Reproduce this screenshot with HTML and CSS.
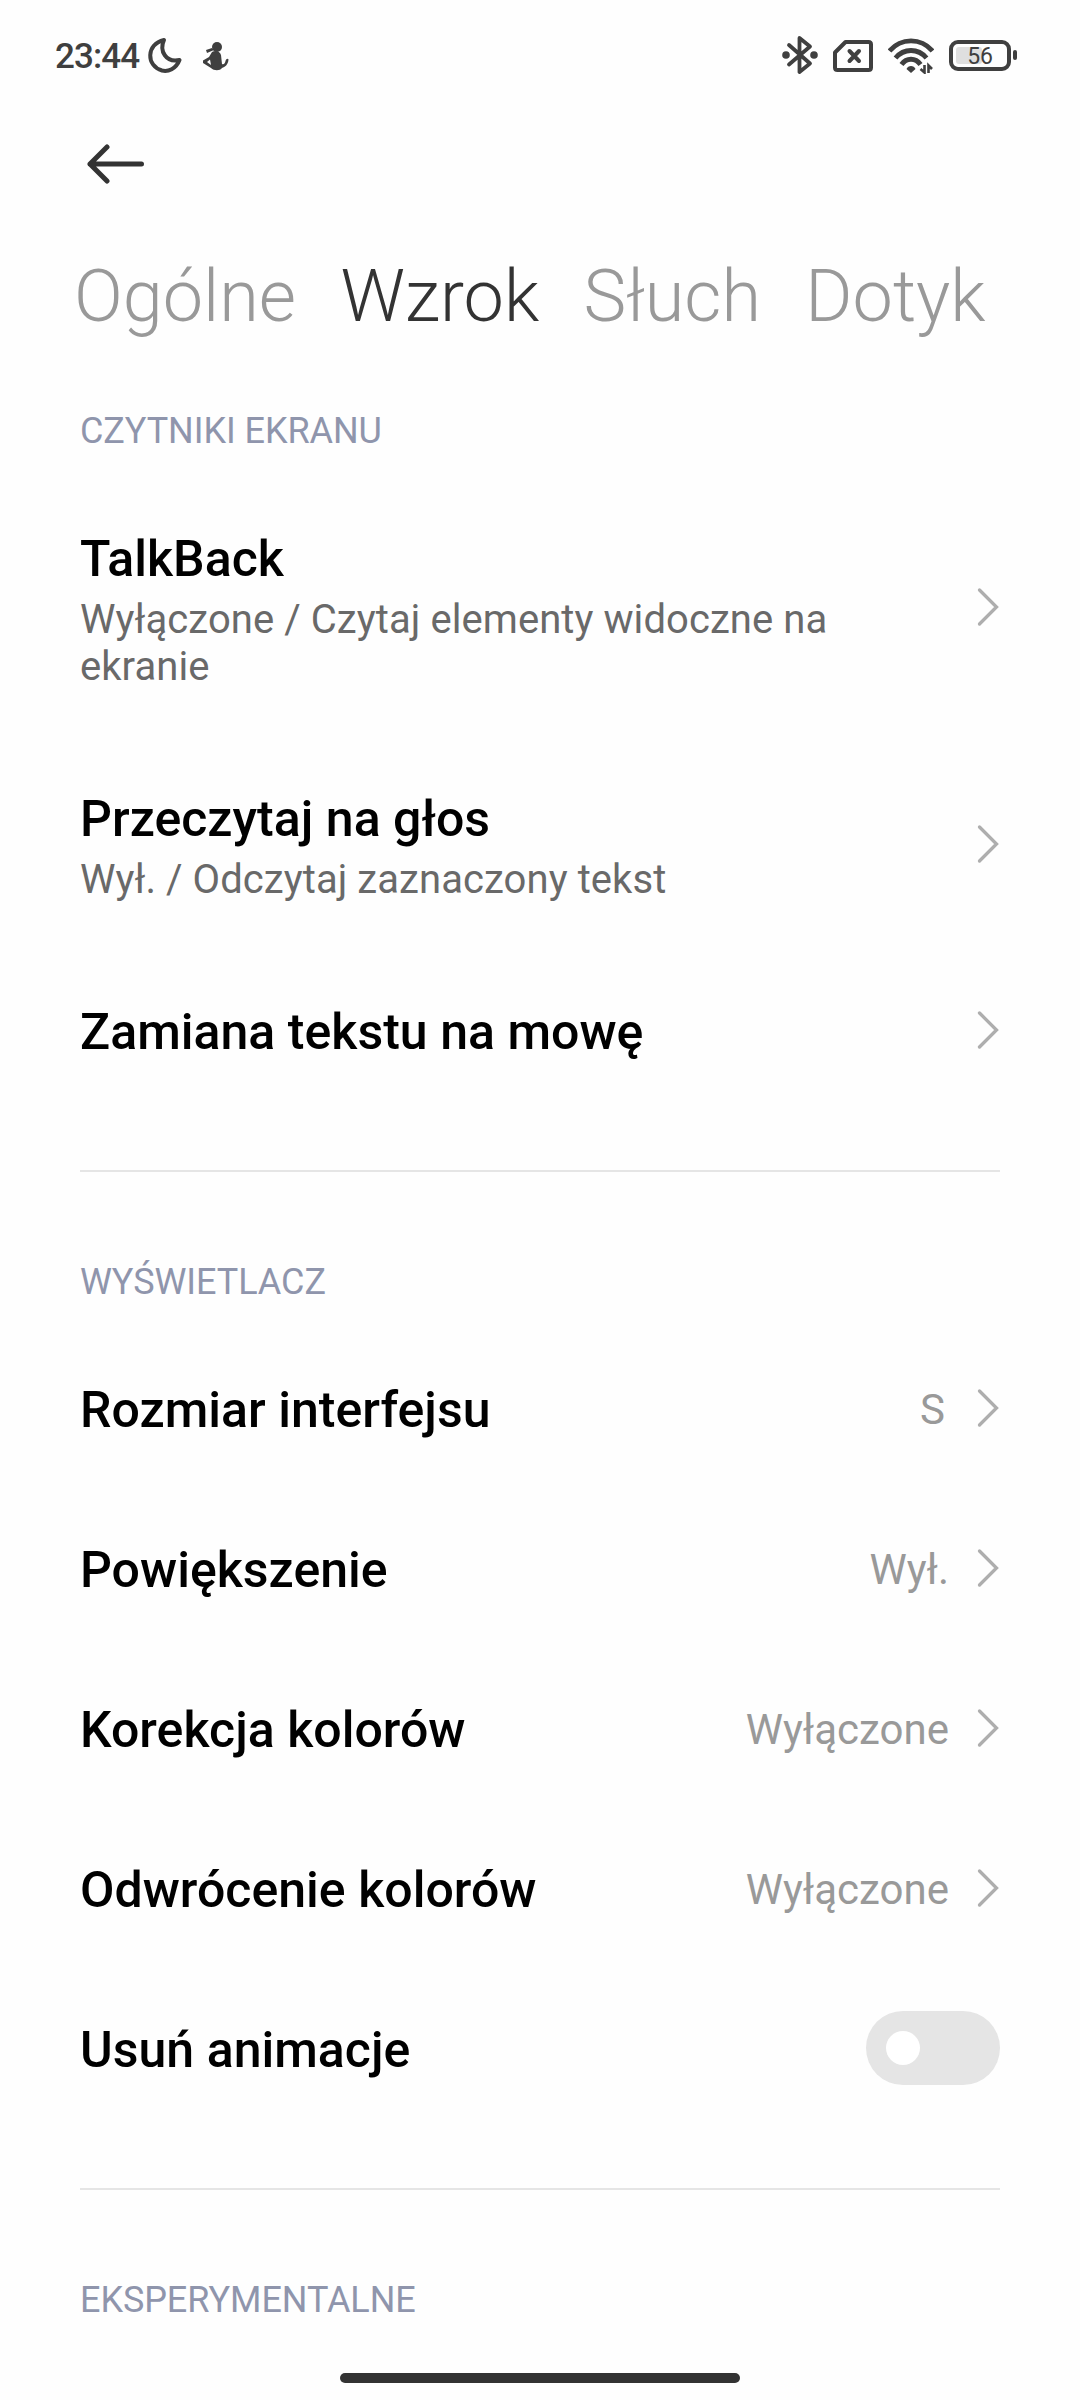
FILE: index.html
```html
<!DOCTYPE html>
<html lang="pl">
<head>
<meta charset="utf-8">
<title>Ułatwienia dostępu – Wzrok</title>
<link rel="stylesheet" href="styles.css">
</head>
<body>
<svg class="defs" aria-hidden="true">
  <symbol id="chevron" viewBox="0 0 24 40"><path d="M3.500 3 20.500 20 3.500 37" fill="none" stroke="#aeaeae" stroke-width="3.300" stroke-linecap="round"/></symbol>
</svg>

<header class="status">
  <span class="clock">23:44</span>
  <svg class="moon" viewBox="0 0 36 38"><path d="M17 3C12 14 19 26 32.500 23C29 32 21 35 15 33.500C-1 29-1 7 17 3Z" fill="none" stroke="#3f3f3f" stroke-width="4" stroke-linejoin="round"/></svg>
  <svg class="figure" viewBox="0 0 28 30"><g fill="#3f3f3f"><circle cx="15" cy="6" r="5"/><path d="M4 9 10 7 12 9 5 12Z"/><path fill-rule="evenodd" d="M10 11C13 9 18 10 19 14L20 23C22 24 23 22 23.500 20 24 18 26 17 26.500 18.500 26 24 23 26 20 27 18 30 12 30 9 27L1 22 1 19.500 7 16ZM8 18.500 5 21 9 24Z"/></g></svg>
  <span class="spacer"></span>
  <svg class="bluetooth" viewBox="0 0 36 40"><path d="M7 10 28 28.500 17.500 37V3L28 11.500 7 29.500" fill="none" stroke="#3f3f3f" stroke-width="3.800" stroke-linejoin="round" stroke-linecap="round"/><circle cx="4" cy="20" r="3.800" fill="#3f3f3f"/><circle cx="32" cy="20" r="3.800" fill="#3f3f3f"/></svg>
  <svg class="sim" viewBox="0 0 40 32"><path d="M12.500 2H35.500Q38 2 38 4.500V27.500Q38 30 35.500 30H4.500Q2 30 2 27.500V12.500Z" fill="none" stroke="#3f3f3f" stroke-width="4" stroke-linejoin="round"/><path d="M16.500 11 26 21M26 11 16.500 21" stroke="#3f3f3f" stroke-width="4" stroke-linecap="round"/></svg>
  <svg class="wifi" viewBox="0 0 46 36"><g fill="none" stroke="#3f3f3f" stroke-width="4.900"><path d="M1.500 13C13-.5 33-.5 44.500 13"/><path d="M7.500 20C16 10 30 10 38.500 20"/><path d="M13.500 26.500C18.500 19.500 27.500 19.500 32.500 26.500"/></g><path d="M18.500 31C20 27 26 27 27.500 31L23 35Z" fill="#3f3f3f"/><path d="M36.500 27V34.500L32.500 31M40.500 35V27.500L44 31" fill="none" stroke="#3f3f3f" stroke-width="2.600"/></svg>
  <span class="battery"><span class="cell"><span class="level"></span><span class="percent">56</span></span><span class="cap"></span></span>
</header>

<div class="toolbar">
  <svg class="back" viewBox="0 0 58 40"><path d="M54.500 20H3M20 3 3 20 20 37" fill="none" stroke="#333" stroke-width="5" stroke-linecap="round" stroke-linejoin="round"/></svg>
</div>

<nav class="tabs">
  <span class="tab">Ogólne</span>
  <span class="tab active">Wzrok</span>
  <span class="tab">Słuch</span>
  <span class="tab">Dotyk</span>
</nav>

<main>
  <section class="group">
    <h2 class="heading">CZYTNIKI EKRANU</h2>
    <div class="row detailed">
      <div class="label"><h3 class="title">TalkBack</h3><p class="summary">Wyłączone / Czytaj elementy widoczne na ekranie</p></div>
      <svg class="chevron"><use href="#chevron"/></svg>
    </div>
    <div class="row detailed">
      <div class="label"><h3 class="title">Przeczytaj na głos</h3><p class="summary">Wył. / Odczytaj zaznaczony tekst</p></div>
      <svg class="chevron"><use href="#chevron"/></svg>
    </div>
    <div class="row">
      <h3 class="title">Zamiana tekstu na mowę</h3>
      <svg class="chevron"><use href="#chevron"/></svg>
    </div>
  </section>

  <section class="group">
    <h2 class="heading">WYŚWIETLACZ</h2>
    <div class="row">
      <h3 class="title">Rozmiar interfejsu</h3>
      <span class="value short">S</span>
      <svg class="chevron"><use href="#chevron"/></svg>
    </div>
    <div class="row">
      <h3 class="title">Powiększenie</h3>
      <span class="value">Wył.</span>
      <svg class="chevron"><use href="#chevron"/></svg>
    </div>
    <div class="row">
      <h3 class="title">Korekcja kolorów</h3>
      <span class="value">Wyłączone</span>
      <svg class="chevron"><use href="#chevron"/></svg>
    </div>
    <div class="row">
      <h3 class="title">Odwrócenie kolorów</h3>
      <span class="value">Wyłączone</span>
      <svg class="chevron"><use href="#chevron"/></svg>
    </div>
    <div class="row">
      <h3 class="title">Usuń animacje</h3>
      <span class="switch"><span class="knob"></span></span>
    </div>
  </section>

  <section class="group">
    <h2 class="heading">EKSPERYMENTALNE</h2>
  </section>
</main>

<footer class="gesture"><span class="handle"></span></footer>
</body>
</html>
```
FILE: styles.css
```css
* { box-sizing: border-box; }

body {
  display: flex;
  flex-direction: column;
  width: 1080px;
  height: 2400px;
  margin: 0;
  overflow: hidden;
  background: #fefefe;
  color: #000;
  font-family: Roboto, sans-serif;
}

h2, h3, p { margin: 0; }
svg { display: block; flex: none; }
.defs { position: absolute; width: 0; height: 0; }

/* Status bar */
.status {
  display: flex;
  align-items: center;
  height: 112px;
  padding: 0 63px 0 55px;
  color: #3f3f3f;
}
.clock { width: 92px; padding-top: 2px; font-size: 35px; line-height: 42px; font-weight: 500; letter-spacing: -0.9px; white-space: nowrap; }
.moon { width: 36px; height: 38px; }
.figure { width: 28px; height: 30px; margin-left: 19px; }
.spacer { flex: 1; }
.bluetooth { width: 36px; height: 40px; margin-top: -3px; }
.sim { width: 40px; height: 32px; margin-left: 15px; }
.wifi { width: 46px; height: 36px; margin-left: 15px; margin-top: -1px; }
.battery { display: flex; align-items: center; gap: 2px; margin-left: 15px; margin-top: -2px; }
.cell {
  display: grid;
  align-items: center;
  width: 62px;
  height: 31px;
  padding: 3px;
  border: 4px solid #3f3f3f;
  border-radius: 9px;
}
.level, .percent { grid-area: 1 / 1; }
.level { width: 26px; height: 17px; border-radius: 3px; background: #dfdfdf; }
.percent { padding-top: 1px; text-align: center; font-size: 23px; line-height: 17px; font-weight: 400; letter-spacing: -0.3px; }
.cap { width: 4px; height: 10px; border-radius: 2px; background: #3f3f3f; }

/* Header */
.toolbar { height: 132px; padding: 32px 87px 0; }
.back { width: 58px; height: 40px; }
.tabs {
  display: flex;
  gap: 44.3px;
  height: 77px;
  padding-left: 74px;
  line-height: 106px;
  font-size: 72px;
  font-weight: 300;
  color: #999;
  white-space: nowrap;
}
.active { color: #333; }

/* Preference list */
main { flex: 1; padding: 0 80px; }
.group + .group { margin-top: 60px; border-top: 2px solid #e5e5e5; }
.heading {
  height: 156px;
  padding-top: 89px;
  font-size: 36px;
  line-height: 42px;
  font-weight: 400;
  letter-spacing: -0.07px;
  color: #8f95ac;
}
.row { display: flex; align-items: center; height: 160px; }
.row.detailed { height: auto; }
.label { flex: 1; padding: 53px 120px 47px 0; }
.title { flex: 1; font-size: 50px; line-height: 59px; font-weight: 500; letter-spacing: 0.03px; }
.row > .title { padding-top: 4px; }
.summary { margin-top: 7px; font-size: 40px; line-height: 47px; letter-spacing: 0.07px; color: #696969; }
.value { margin-right: 27px; padding-top: 4px; font-size: 42px; line-height: 50px; color: #999; }
.value.short { margin-right: 31px; }
.chevron { width: 24px; height: 40px; }
.switch { display: flex; align-items: center; width: 134px; height: 74px; padding-left: 20px; border-radius: 37px; background: #e5e5e5; }
.knob { width: 34px; height: 34px; border-radius: 50%; background: #fff; }

/* Gesture bar */
.gesture { display: flex; justify-content: center; height: 27px; }
.handle { width: 400px; height: 10px; border-radius: 5px; background: #333; }
```
